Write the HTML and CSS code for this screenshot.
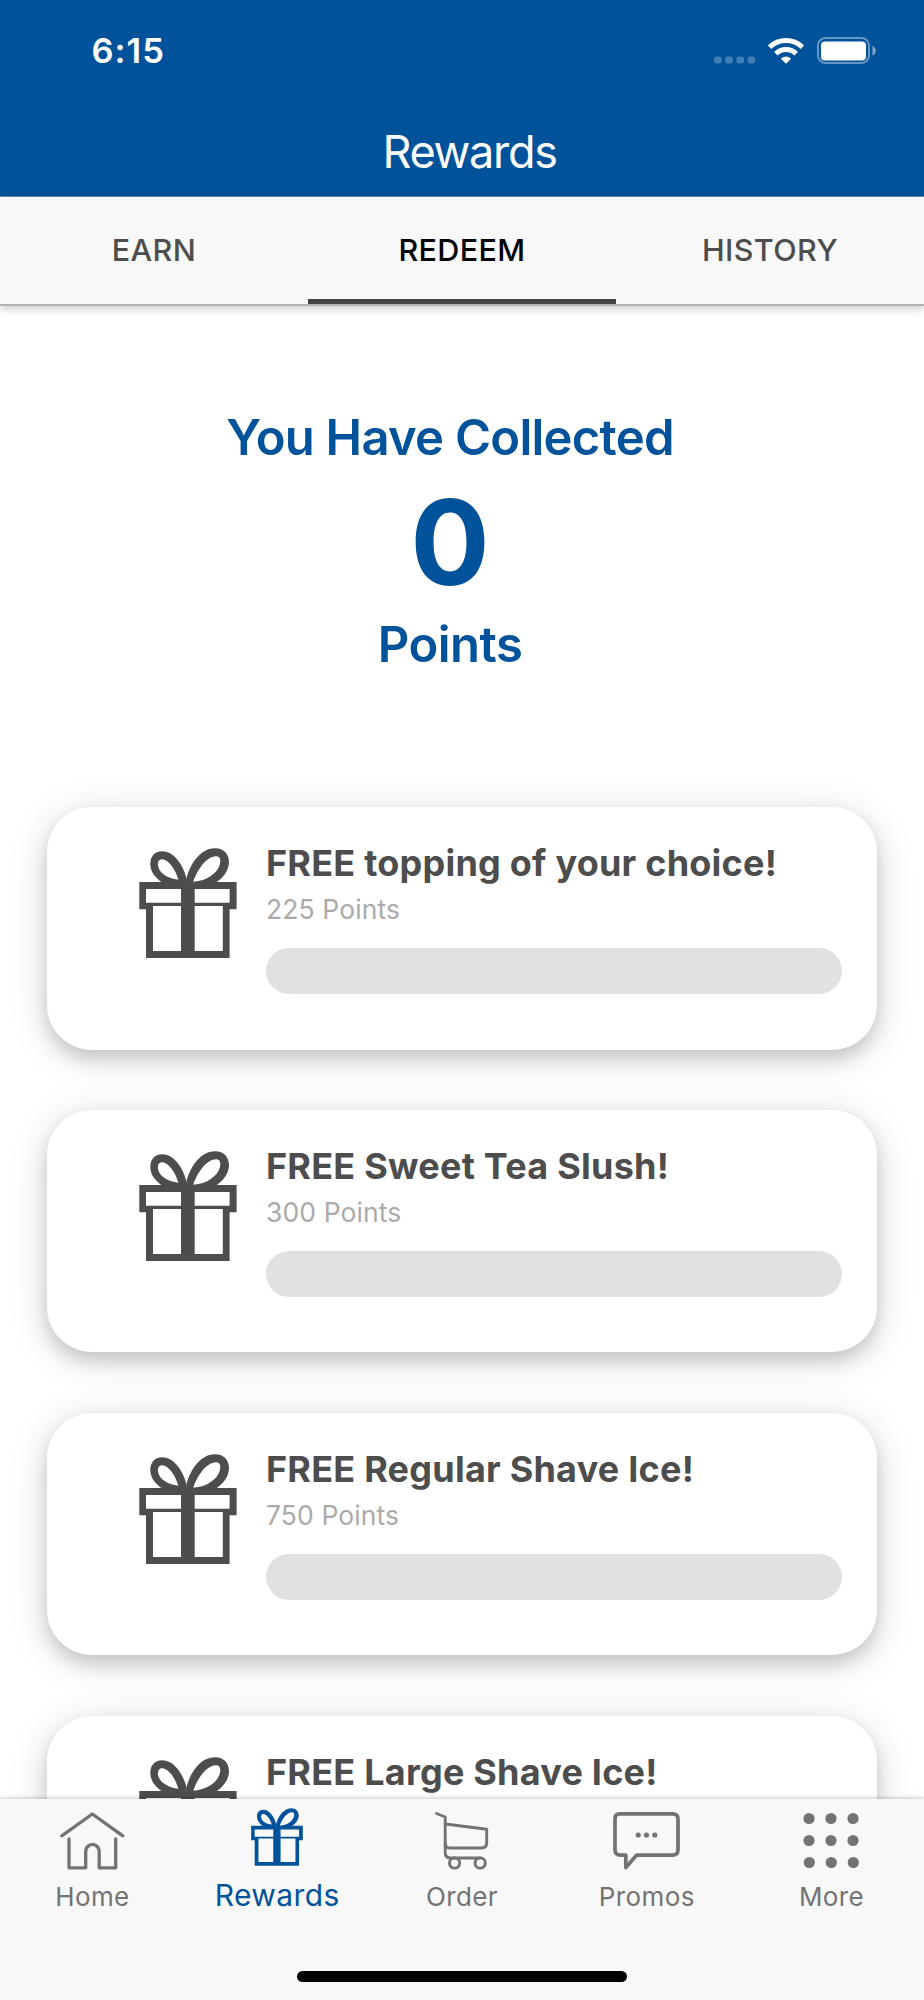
FILE: index.html
```html
<!DOCTYPE html>
<html lang="en">
<head>
<meta charset="utf-8">
<title>Rewards</title>
<link rel="stylesheet" href="styles.css">
</head>
<body>
<svg class="defs" aria-hidden="true">
  <symbol id="gift" viewBox="139 848 98 110.5" preserveAspectRatio="none">
    <path fill="currentColor" fill-rule="evenodd" d="M139.3 882H236.6V909.3H229.6V958H146V909.3H139.3ZM146 889V902.7H181V889ZM194.7 889V902.7H229.6V889ZM153 906V951H181V906ZM194.7 906V951H222.8V906Z"/>
    <g transform="translate(120 830) scale(.33333)" fill="currentColor" fill-rule="evenodd">
      <path d="M200 158V147C192 112 165 64 127 64C102 64 90 82 91 105C92 127 108 145 127 158ZM175 149C167 120 146 88 126 88C115 88 112 99 115 111C120 131 146 146 175 149Z"/>
      <path d="M199 158V147C207 112 236 55 285 55C313 55 327 74 327 97C327 122 307 147 287 158ZM220 155C229 127 256 79 289 79C301 79 303 92 299 105C292 129 261 153 220 155Z"/>
    </g>
  </symbol>
</svg>
<header class="header">
  <div class="status">
    <span class="time">6:15</span>
    <div class="status-icons">
      <svg class="signal" viewBox="0 0 42 27" width="42" height="27"><g fill="#fff" opacity=".25"><rect x="0" y="19.500" width="7.700" height="7" rx="2.400"/><rect x="11.200" y="19.500" width="7.700" height="7" rx="2.400"/><rect x="22.400" y="19.500" width="7.700" height="7" rx="2.400"/><rect x="33.600" y="19.500" width="7.700" height="7" rx="2.400"/></g></svg>
      <svg class="wifi" viewBox="768 36.500 36 27" width="36" height="27"><g fill="none" stroke="#fff" stroke-width="5"><path d="M769.600 46.600A23.600 23.600 0 0 1 802.400 46.600"/><path d="M775.800 53.200A14.500 14.500 0 0 1 796.200 53.200"/></g><path fill="#fff" d="M780.800 58.200Q786 53.600 791.200 58.200L786 63.300Z"/></svg>
      <svg class="battery" viewBox="817 36.500 60 27" width="60" height="27"><rect x="818" y="37.500" width="51" height="25" rx="7.500" fill="none" stroke="#fff" stroke-opacity=".4" stroke-width="2"/><rect x="821" y="41" width="45" height="19" rx="4" fill="#fff"/><path d="M872.500 45.500Q875.800 47 875.800 50.300T872.500 55Z" fill="#fff" fill-opacity=".5"/></svg>
    </div>
  </div>
  <h1 class="title">Rewards</h1>
</header>
<nav class="tabs">
  <a class="tab">EARN</a>
  <a class="tab tab-active">REDEEM</a>
  <a class="tab">HISTORY</a>
</nav>
<main class="content">
  <section class="summary">
    <p class="lead">You Have Collected</p>
    <p class="count">0</p>
    <p class="unit">Points</p>
  </section>
  <section class="cards">
    <article class="card"><svg class="gift"><use href="#gift"/></svg><div class="info"><h2>FREE topping of your choice!</h2><p>225 Points</p><div class="bar"></div></div></article>
    <article class="card"><svg class="gift"><use href="#gift"/></svg><div class="info"><h2>FREE Sweet Tea Slush!</h2><p>300 Points</p><div class="bar"></div></div></article>
    <article class="card"><svg class="gift"><use href="#gift"/></svg><div class="info"><h2>FREE Regular Shave Ice!</h2><p>750 Points</p><div class="bar"></div></div></article>
    <article class="card"><svg class="gift"><use href="#gift"/></svg><div class="info"><h2>FREE Large Shave Ice!</h2></div></article>
  </section>
</main>
<footer class="bottom">
  <nav class="dock">
    <a class="item"><svg viewBox="59 1811 67 60" width="67" height="60"><g fill="none" stroke="#737373" stroke-width="3.300" stroke-linecap="round" stroke-linejoin="round"><path d="M61.800 1835.800L92.300 1814L122.800 1835.800"/><path d="M69 1839V1867.800H85.700V1851.500A6.700 7 0 0 1 99.200 1851.500V1867.800H115.700V1839"/></g></svg><span>Home</span></a>
    <a class="item item-active"><svg class="dock-gift"><use href="#gift"/></svg><span>Rewards</span></a>
    <a class="item"><svg viewBox="434 1811 56 60" width="56" height="60"><g fill="none" stroke="#737373" stroke-width="2.900" stroke-linecap="round" stroke-linejoin="round"><path d="M436.500 1813.500L445.200 1817V1852.500Q445.200 1858 450.500 1858H480"/><path d="M445.500 1824L486.700 1829.300V1842.500Q486.700 1848 481.500 1848H450Q445.200 1848 445.200 1843"/><circle cx="454.600" cy="1863" r="5.100"/><circle cx="480.200" cy="1863" r="5.100"/></g></svg><span>Order</span></a>
    <a class="item"><svg viewBox="612 1811 69 60" width="69" height="60"><path fill="none" stroke="#737373" stroke-width="3.700" stroke-linejoin="round" d="M619.500 1813.800H672.500Q678 1813.800 678 1819V1849.500Q678 1855.200 672.500 1855.200H636.500L625.800 1867.600V1855.200H620.500Q615 1855.200 615 1849.500V1819Q615 1813.800 619.500 1813.800Z"/><g fill="#737373"><circle cx="638.200" cy="1835" r="2.600"/><circle cx="646.500" cy="1835" r="2.600"/><circle cx="654.800" cy="1835" r="2.600"/></g></svg><span>Promos</span></a>
    <a class="item"><svg viewBox="803 1811 57 60" width="57" height="60"><g fill="#737373"><circle cx="809" cy="1818.500" r="5.600"/><circle cx="831" cy="1818.500" r="5.600"/><circle cx="853" cy="1818.500" r="5.600"/><circle cx="809" cy="1840.500" r="5.600"/><circle cx="831" cy="1840.500" r="5.600"/><circle cx="853" cy="1840.500" r="5.600"/><circle cx="809.300" cy="1862.500" r="5.600"/><circle cx="831.300" cy="1862.500" r="5.600"/><circle cx="853.300" cy="1862.500" r="5.600"/></g></svg><span>More</span></a>
  </nav>
  <div class="home-indicator"></div>
</footer>
</body>
</html>
```
FILE: styles.css
```css
* { box-sizing: border-box; margin: 0; padding: 0; }
body { width: 924px; height: 2000px; overflow: hidden; display: flex; flex-direction: column; background: #fff; font-family: Inter, "Liberation Sans", sans-serif; }
.defs { display: none; }
.header { flex: none; height: 197px; background: #00529b; border-bottom: 1px solid #5a88b5; color: #fff; }
.status { height: 106px; padding: 0 47px 5px 91.500px; display: flex; align-items: center; justify-content: space-between; }
.time { font-size: 34.500px; font-weight: 600; line-height: 40px; letter-spacing: 1px; }
.status-icons { display: flex; align-items: center; }
.signal { margin-right: 12px; }
.wifi { margin-right: 13px; }
.title { height: 90px; padding-left: 15px; line-height: 91px; text-align: center; font-size: 45px; font-weight: 400; letter-spacing: -1.3px; }
.tabs { flex: none; position: relative; z-index: 2; height: 109px; display: grid; grid-template-columns: repeat(3, 1fr); grid-template-rows: 107px; background: #f8f8f8; border-bottom: 2px solid #b2b2b2; box-shadow: 0 3px 8px rgba(0,0,0,.2); }
.tab { text-align: center; font-size: 30.5px; font-weight: 500; line-height: 106px; letter-spacing: .4px; color: #4d4d4d; }
.tab-active { color: #000; box-shadow: inset 0 -5px #434343; }
.content { flex: 1; min-height: 0; overflow: hidden; }
.summary { width: 900px; padding-top: 102px; color: #00529b; text-align: center; font-weight: 600; }
.lead { font-size: 49px; line-height: 60px; letter-spacing: -.74px; }
.count { font-size: 118px; font-weight: 700; line-height: 149px; }
.unit { font-size: 49px; line-height: 56px; letter-spacing: -.5px; }
.cards { margin-top: 134px; padding: 0 47px; display: flex; flex-direction: column; gap: 60.4px; }
.card { flex: none; height: 242.500px; padding: 36px 35px 0 92px; display: grid; grid-template-columns: 98px 1fr; column-gap: 29px; align-items: start; border-radius: 45px; background: #fff; box-shadow: 0 9px 18px rgba(0,0,0,.16), 0 6px 42px rgba(0,0,0,.13); }
.gift { width: 98px; height: 110.500px; margin-top: 5px; color: #4d4d4d; }
.info h2 { font-size: 36px; font-weight: 700; line-height: 41px; letter-spacing: .23px; color: #4d4d4d; white-space: nowrap; }
.info p { font-size: 26.500px; line-height: 51px; letter-spacing: .1px; color: #aaa; }
.bar { margin-top: 13px; height: 46px; border-radius: 23px; background: #e1e1e1; }
.bottom { flex: none; position: relative; z-index: 2; height: 201px; background: #f8f8f8; box-shadow: 0 -1px 4px rgba(0,0,0,.22); }
.dock { height: 172px; padding-top: 12px; display: grid; grid-template-columns: repeat(5, 1fr); }
.item { display: flex; flex-direction: column; align-items: center; color: #737373; font-size: 26px; line-height: 51px; letter-spacing: .4px; }
.item-active { color: #00529b; font-size: 30px; line-height: 48px; }
.dock-gift { width: 52px; height: 58px; margin: -3px 0 5px; }
.home-indicator { width: 330px; height: 11px; margin: 0 auto; border-radius: 6px; background: #000; }
```
